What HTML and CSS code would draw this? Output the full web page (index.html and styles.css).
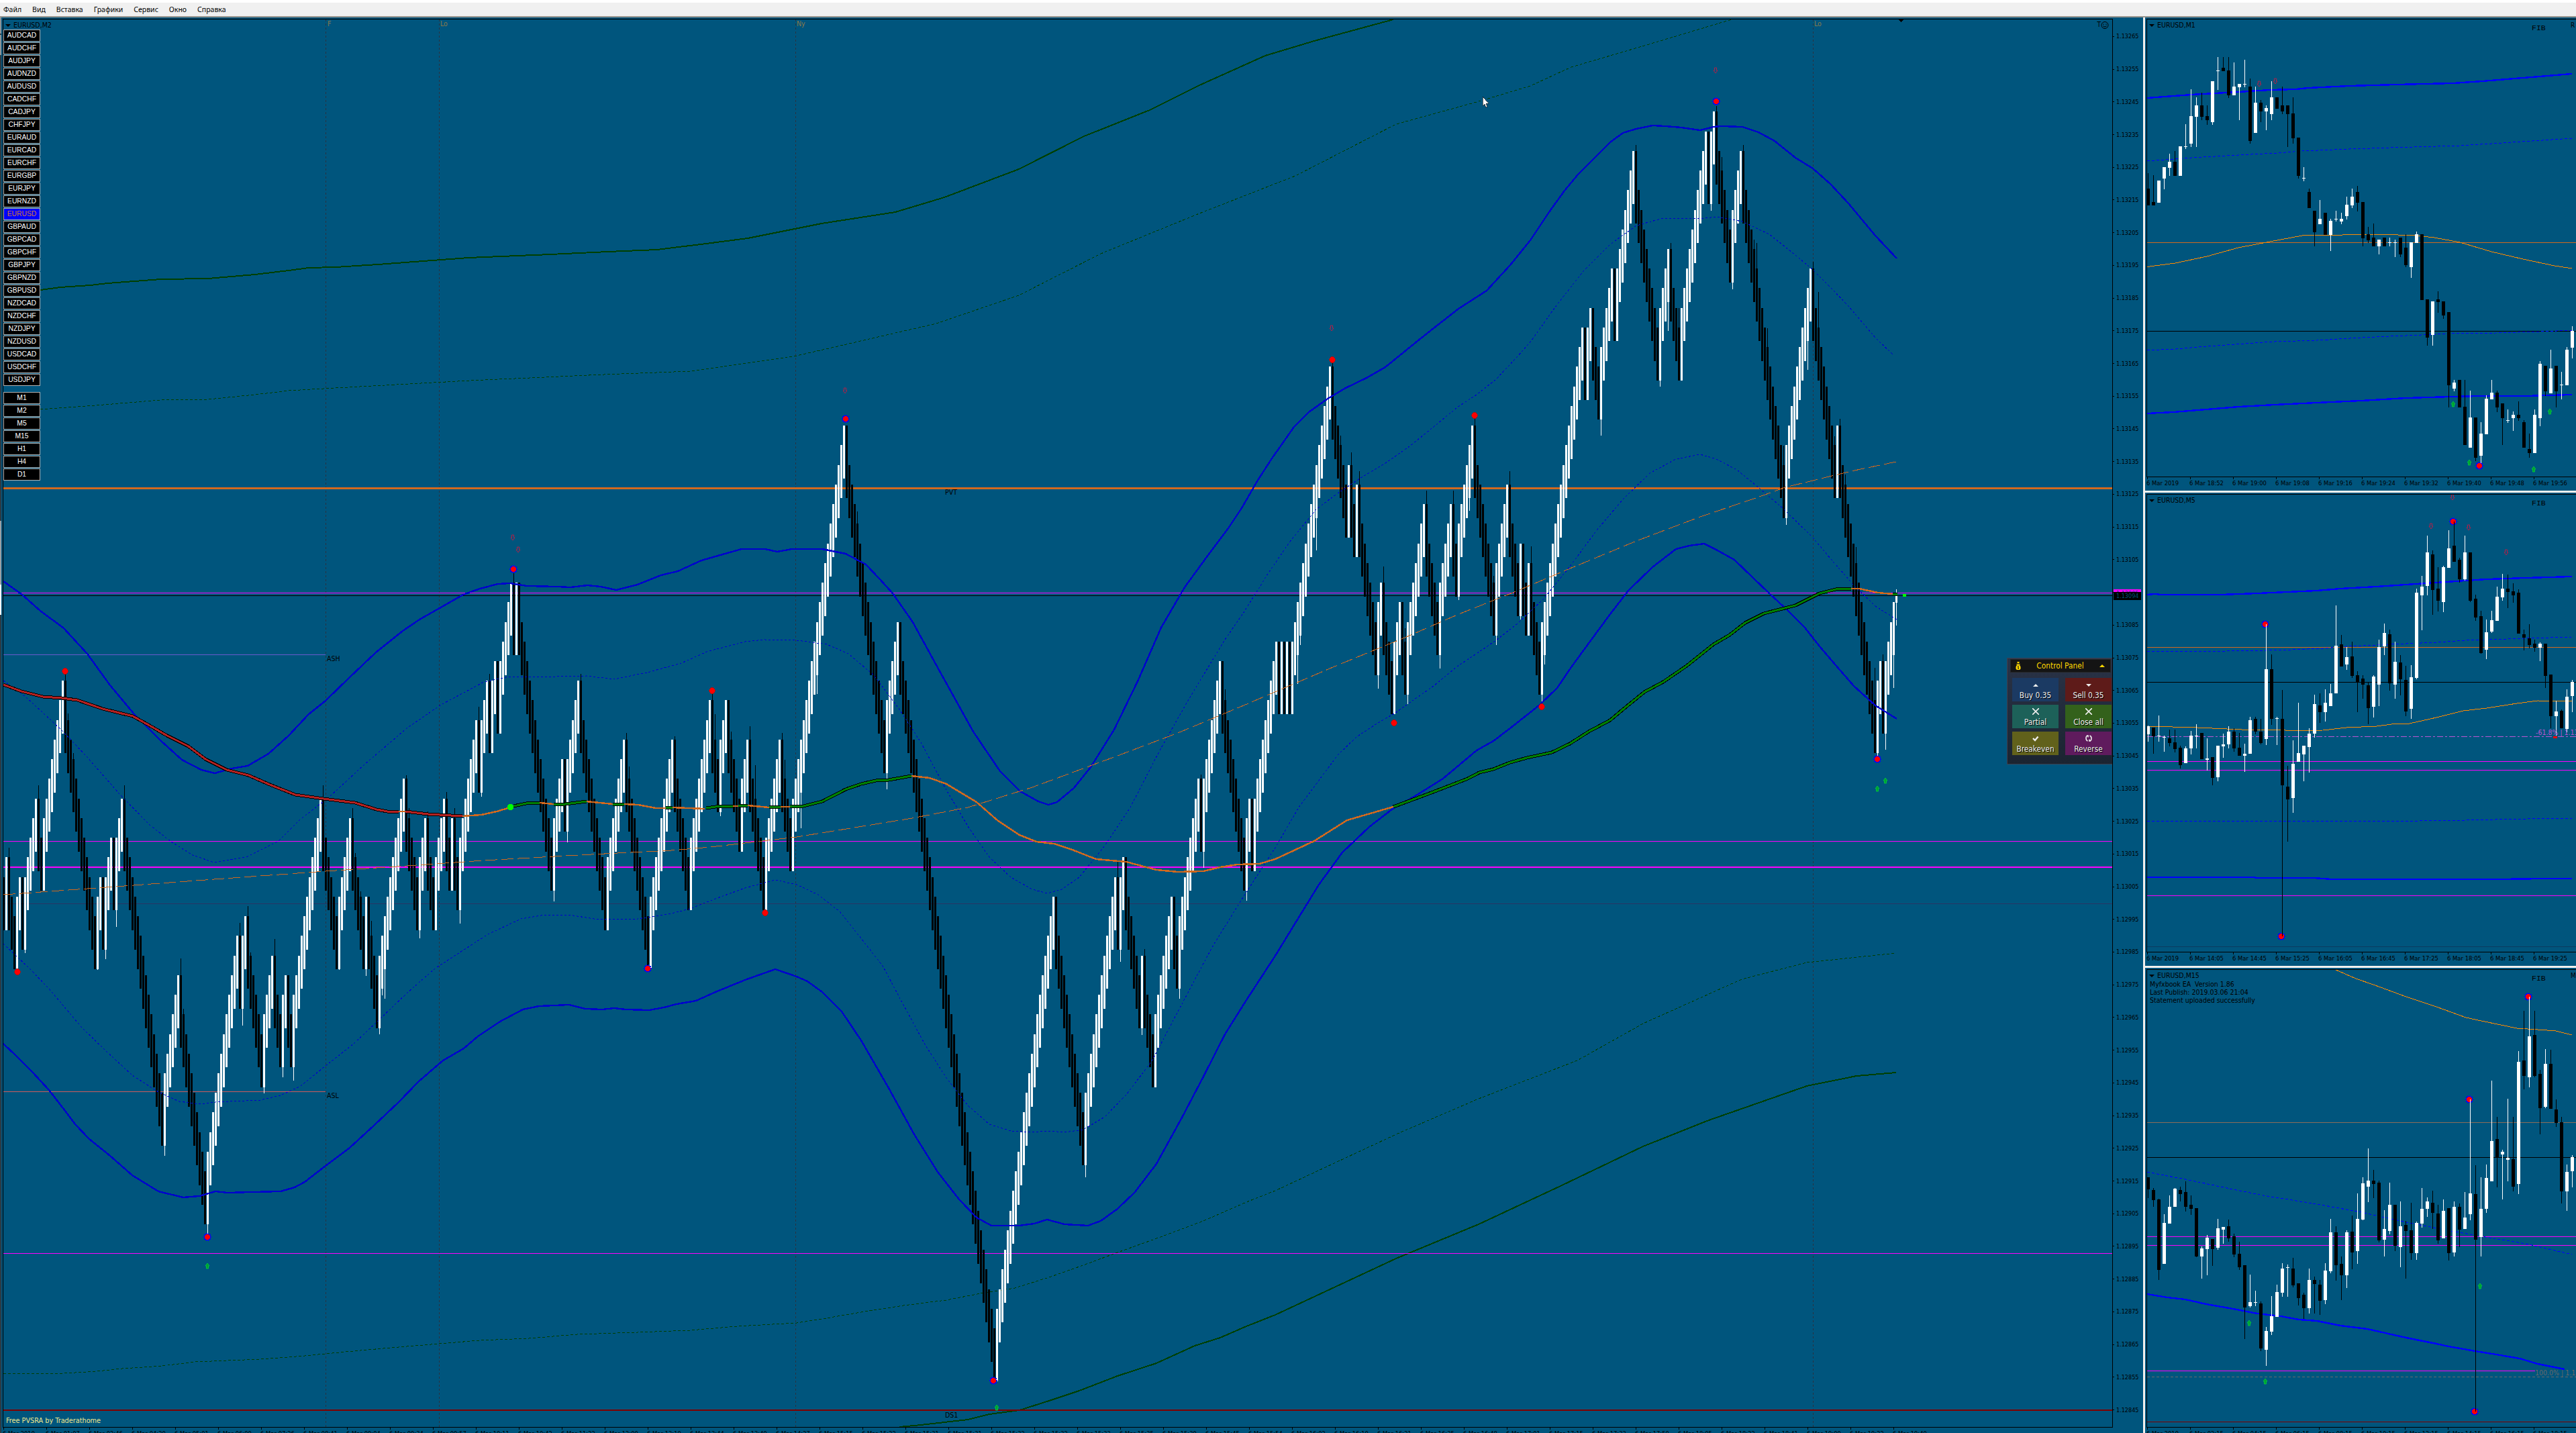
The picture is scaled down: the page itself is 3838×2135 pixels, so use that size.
FILE: index.html
```html
<!DOCTYPE html>
<html lang="ru">
<head>
  <meta charset="UTF-8" />
  <title>EURUSD,M2</title>
  <link rel="stylesheet" href="styles.css">
</head>
<body>
  <nav class="menubar">
    <span>Файл</span><span>Вид</span><span>Вставка</span><span>Графики</span><span>Сервис</span><span>Окно</span><span>Справка</span>
  </nav>

  <div class="workspace">
    <div class="edge"></div>

    <!-- Main chart -->
    <section class="window main">
      <div class="row">
        <div class="plot">
          <svg id="main" viewBox="5 29 3142 2097"></svg>
          <div class="title"><i class="tri"></i>EURUSD,M2</div>
          <div class="corner">T<svg class="smile" viewBox="0 0 12 12"><circle cx="6" cy="6" r="5"/><path d="M4 4v1.5M8 4v1.5M3.3 7.2Q6 10 8.7 7.2"/></svg></div>
          <div class="buttons">
            <div class="list" id="pairs"></div>
            <div class="list" id="frames"></div>
          </div>
          <div class="credit">Free PVSRA by Traderathome</div>

          <div class="panel">
            <div class="panel-head">
              <svg class="bag" viewBox="0 0 8 12"><path d="M2 0h4l-1 2h-2zM1.5 3h5v1h-5zM2 4.5h4l1.5 3v3l-1.5 1.5h-4l-1.500-1.500v-3z"/><path class="hole" d="M3 6.500h2v1h-1v1h1v2h-2v-1h1v-1h-1z"/></svg>
              <span>Control Panel</span>
              <i class="up"></i>
            </div>
            <div class="panel-grid">
              <button class="buy"><i class="up"></i>Buy 0.35</button>
              <button class="sell"><i class="down"></i>Sell 0.35</button>
              <button class="partial"><svg viewBox="0 0 10 10"><path d="M0 0L10 10M10 0L0 10"/></svg>Partial</button>
              <button class="close"><svg viewBox="0 0 10 10"><path d="M0 0L10 10M10 0L0 10"/></svg>Close all</button>
              <button class="even"><svg viewBox="0 0 10 10"><path class="thick" d="M1 5L4 8L8.500 2.500"/></svg>Breakeven</button>
              <button class="reverse"><svg viewBox="0 0 10 10"><path d="M4 1Q1 1 1 5Q1 8 3.500 9M6 9Q9 9 9 5Q9 2 6.500 1M2 1h2v2.500M8 9h-2v-2.500"/></svg>Reverse</button>
            </div>
          </div>
        </div>
        <div class="scale" id="scale">
          <div class="price ask">1.13095</div>
          <div class="price bid">1.13094</div>
        </div>
      </div>
      <div class="times" id="times-main"></div>
    </section>

    <!-- Side charts -->
    <div class="side">
      <section class="window">
        <div class="plot">
          <svg id="m1" viewBox="3199 29 639 681"></svg>
          <div class="title"><i class="tri"></i>EURUSD,M1</div>
          <div class="fib">FIB</div><div class="edge-text">R</div>
        </div>
        <div class="times" id="times-m1"></div>
      </section>
      <section class="window">
        <div class="plot">
          <svg id="m5" viewBox="3199 737 639 681"></svg>
          <div class="title"><i class="tri"></i>EURUSD,M5</div>
          <div class="fib">FIB</div>
        </div>
        <div class="times" id="times-m5"></div>
      </section>
      <section class="window">
        <div class="plot">
          <svg id="m15" viewBox="3199 1445 639 681"></svg>
          <div class="title"><i class="tri"></i>EURUSD,M15
            <p>Myfxbook EA&nbsp; Version 1.86<br>Last Publish: 2019.03.06 21:04<br>Statement uploaded successfully</p>
          </div>
          <div class="fib">FIB</div><div class="edge-text">M</div>
        </div>
        <div class="times" id="times-m15"></div>
      </section>
    </div>
  </div>

  <script src="script.js"></script>
</body>
</html>
```

FILE: styles.css
```css
* {
  box-sizing: border-box;
}

body {
  margin: 0;
  width: 3838px;
  height: 2135px;
  overflow: hidden;
  background: #00557d;
  color: #000;
  font-family: 'DejaVu Sans Condensed', 'DejaVu Sans', sans-serif;
  font-size: 9px;
}

.menubar {
  display: flex;
  gap: 16px;
  height: 26px;
  padding: 1px 0 0 5px;
  background: #f0f0f0;
  border-top: 4px solid #fff;
  border-bottom: 2px solid #9a968f;
  font: 10.5px/18px 'Noto Sans', sans-serif;
}

.workspace {
  display: flex;
  height: 2109px;
}

.edge {
  width: 2px;
  background: linear-gradient(#8b9499 0 24px, #2c3b45 24px 26px, #8b9499 26px 56px, #2c3b45 56px 750px, #9aa1a5 750px 845px, #fff 845px 890px, #2c3b45 890px);
}

.window {
  display: flex;
  flex-direction: column;
  padding: 2px 0 0 2px;
}

.main {
  width: 3191px;
}

.row {
  display: flex;
  height: 2099px;
}

.plot {
  position: relative;
  border: 1px solid #000;
  height: 683px;
}

.row .plot {
  width: 3144px;
  height: 2099px;
}

.plot > svg {
  display: block;
  width: 100%;
  height: 100%;
  shape-rendering: crispEdges;
}

.side {
  display: flex;
  flex-direction: column;
  width: 645px;
  border-left: 3px solid #f2f0ee;
}

.side .window {
  height: 705px;
  border-top: 3px solid #f2f0ee;
}

.side .window + .window {
  height: 708px;
}

.side .window:first-child {
  border-top: none;
}

.side .plot {
  border-right: none;
}

.title {
  position: absolute;
  left: 15px;
  top: 2px;
  font-size: 10.5px;
  line-height: 13px;
  white-space: nowrap;
}

.tri {
  position: absolute;
  left: -12px;
  top: 5px;
  border: 4px solid transparent;
  border-top-color: #000;
  border-bottom: 0;
}

.title p {
  margin: 0 0 0 -11px;
  line-height: 12px;
}

.corner {
  position: absolute;
  right: 5px;
  top: 2px;
  display: flex;
  font-size: 10px;
}

.smile {
  width: 12px;
  height: 13px;
  fill: none;
  stroke: #000;
}

.fib {
  position: absolute;
  left: 573px;
  top: 6px;
  font: 11.5px/13px 'Liberation Mono', monospace;
}

.edge-text {
  position: absolute;
  left: 631px;
  top: 3px;
  font-size: 10px;
}

/* Symbol and timeframe buttons */
.buttons {
  position: absolute;
  left: 0;
  top: 15px;
  display: flex;
  flex-direction: column;
  gap: 9px;
}

.list {
  display: flex;
  flex-direction: column;
  gap: 1px;
}

.list span {
  width: 55px;
  height: 18px;
  background: #000;
  border: 1px solid #b4b4b4;
  color: #fff;
  font: 10.3px/16px 'Liberation Sans', sans-serif;
  text-align: center;
}

.list .active {
  background: #0000ff;
  color: #d2783c;
}

.credit {
  position: absolute;
  left: 4px;
  bottom: 3px;
  color: #f0e68c;
  font-size: 10.8px;
}

/* Price and time scales */
.scale {
  position: relative;
  width: 45px;
  padding-top: 2px;
}

.scale .mark {
  display: flex;
  align-items: center;
  gap: 3px;
  height: 48.73px;
}

.scale .mark::before {
  content: '';
  width: 2px;
  height: 1px;
  background: #000;
}

.price {
  position: absolute;
  left: 1px;
  top: 850px;
  width: 41px;
  height: 12px;
  padding-left: 4px;
  line-height: 12px;
  background: #ff00ff;
  color: #00557d;
}

.bid {
  top: 854px;
  background: #000;
}

.times {
  display: flex;
  overflow: hidden;
  height: 20px;
  padding-left: 1px;
}

.main .times {
  height: 8px;
}

.times span {
  flex: none;
  width: 64px;
  height: 3px;
  padding-top: 3px;
  border-left: 1px solid #000;
  white-space: nowrap;
  text-indent: -2px;
  font-size: 9.4px;
}

/* Trade panel */
.panel {
  position: absolute;
  left: 2985px;
  top: 951px;
  width: 157px;
  height: 159px;
  padding: 1px 0 0 4px;
  background: linear-gradient(#2a3347, #1b2431);
  border: 1px solid #3b4254;
  border-right: none;
  font-size: 11.8px;
}

.panel-head {
  display: flex;
  align-items: center;
  justify-content: space-between;
  width: 150px;
  height: 20px;
  padding: 0 8px 0 7px;
  background: #141414;
  border: 1px solid #262626;
  color: #ffd800;
}

.bag {
  width: 8px;
  height: 12px;
  fill: #ffd800;
}

.bag .hole {
  fill: #141414;
}

.up,
.down {
  width: 0;
  height: 0;
  border: 4px solid transparent;
  border-bottom-color: currentColor;
  border-top: 0;
}

.down {
  border-top: 4px solid currentColor;
  border-bottom: 0;
}

.panel-grid {
  display: grid;
  grid-template-columns: 69px 69px;
  gap: 5px 10px;
  padding: 8px 0 0 3px;
}

.panel-grid button {
  display: flex;
  flex-direction: column;
  align-items: center;
  justify-content: space-between;
  height: 35px;
  padding: 5px 0 2px;
  border: none;
  color: #eee;
  font: inherit;
  line-height: 14px;
  text-shadow: 1px 1px #000;
}

.panel-grid button i {
  margin-top: 4px;
}

.panel-grid svg {
  width: 10px;
  height: 10px;
  fill: none;
  stroke: #eee;
  stroke-width: 1.6;
}

.panel-grid .thick {
  stroke-width: 2.4;
}

.buy { background: #1b3a63; }
.sell { background: #5e1b19; }
.partial { background: #1d6159; }
.close { background: #33611b; }
.even { background: #61611b; }
.reverse { background: #5f1b5d; }

/* Chart lines */
.ln { fill: none; stroke-width: 1; }
.blue { stroke: #0000cd; stroke-width: 2.4; }
.blue-dot { stroke: #0000cd; stroke-dasharray: 3 3; }
.bright { stroke: #0000ff; stroke-width: 2.4; }
.bright-dot { stroke: #0000ff; stroke-dasharray: 4 3; }
.green { stroke: #004000; stroke-width: 2; }
.green-dot { stroke: #004000; stroke-dasharray: 4 3; }
.case { stroke: #000; stroke-width: 5; }
.up-ma { stroke: #008000; stroke-width: 3; }
.down-ma { stroke: #b22222; stroke-width: 3; }
.flat-ma { stroke: #d2691e; stroke-width: 2.5; }
.dash { stroke: #d2691e; stroke-dasharray: 18 6; }
.orange { stroke: #ff8c00; }
.grid { stroke: #2b3140; stroke-dasharray: 3 3; }
.w { fill: #fff; }
.b { fill: #000; }
.note { font-size: 10.500px; }
```

FILE: script.js
```js
const NS = 'http://www.w3.org/2000/svg';
const $ = (id) => document.getElementById(id);

function add(svg, tag, attrs, text) {
  const el = document.createElementNS(NS, tag);
  for (const k in attrs) el.setAttribute(k, attrs[k]);
  if (text) el.textContent = text;
  svg.appendChild(el);
}

function line(svg, cls, pts) {
  add(svg, 'polyline', { class: 'ln ' + cls, points: pts });
}

function hline(svg, y, color, h = 1, x2 = 3838, x1 = 0) {
  add(svg, 'rect', { x: x1, y, width: x2 - x1, height: h, fill: color });
}

function bar(svg, x, cls, top, bottom, width) {
  const y = Math.round(top);
  add(svg, 'rect', { class: cls, x, y, width, height: Math.max(1, Math.round(bottom) - y) });
}

function sun(svg, x, y, star) {
  let p = '';
  for (let i = 0; i < 20; i++) {
    const r = i % 2 ? 4.5 : star ? 7 : 5.6;
    p += `${x + r * Math.cos(i * Math.PI / 10)},${y + r * Math.sin(i * Math.PI / 10)} `;
  }
  add(svg, 'polygon', { points: p, fill: star ? '#0000ff' : '#a01414' });
  add(svg, 'ellipse', { cx: x, cy: y, rx: 4, ry: 4.5, fill: '#ff0000' });
}

function arrow(svg, x, y, up) {
  const s = up ? 1 : -1;
  const p = [[0, -4], [3, 0], [1.5, 0], [1.5, 4], [-1.5, 4], [-1.5, 0], [-3, 0]];
  add(svg, 'polygon', {
    points: p.map(([a, b]) => `${x + a},${y + b * s}`).join(' '),
    fill: up ? '#00a030' : '#00557d', stroke: up ? '#00d040' : '#dc143c', 'shape-rendering': 'auto', 'stroke-width': 0.8
  });
}

// ---------- lists ----------
'AUDCAD AUDCHF AUDJPY AUDNZD AUDUSD CADCHF CADJPY CHFJPY EURAUD EURCAD EURCHF EURGBP EURJPY EURNZD EURUSD GBPAUD GBPCAD GBPCHF GBPJPY GBPNZD GBPUSD NZDCAD NZDCHF NZDJPY NZDUSD USDCAD USDCHF USDJPY'
  .split(' ').forEach((s) => {
    $('pairs').innerHTML += `<span class="${s === 'EURUSD' ? 'active' : ''}">${s}</span>`;
  });
'M1 M2 M5 M15 H1 H4 D1'.split(' ').forEach((s) => {
  $('frames').innerHTML += `<span>${s}</span>`;
});
for (let p = 113265; p >= 112845; p -= 10) {
  $('scale').innerHTML += `<div class="mark">${(p / 100000).toFixed(5)}</div>`;
}

function times(id, list) {
  $(id).innerHTML = list.split(' ').map((t) => `<span>6 Mar ${t}</span>`).join('');
}
times('times-main', '2019 01:07 02:46 04:20 05:01 06:00 07:26 08:41 09:04 09:34 09:57 10:11 10:42 11:22 12:00 13:10 13:44 13:49 14:27 15:15 15:22 15:31 15:31 15:32 15:32 15:33 15:35 15:39 15:45 15:54 16:02 16:10 16:21 16:35 16:48 17:01 17:15 17:33 17:50 18:05 18:22 18:41 19:00 19:22 19:40');
times('times-m1', '2019 18:52 19:00 19:08 19:16 19:24 19:32 19:40 19:48 19:56');
times('times-m5', '2019 14:05 14:45 15:25 16:05 16:45 17:25 18:05 18:45 19:25');
times('times-m15', '2019 02:15 04:15 06:15 08:15 10:15 12:15 14:15 16:15 18:15');

// ---------- main chart ----------
const main = $('main');
[485, 654, 1185, 2701].forEach((x) => line(main, 'grid', `${x}.5,29 ${x}.5,2126`));
line(main, 'green', '60,432 90,428 135,425 160,422 200,419 240,416 310,415 380,409 430,403 460,399 500,398 563,394 698,384 820,379 906,375 979,372 1052,363 1114,355 1224,333 1334,316 1407,294 1518,252 1615,203 1713,164 1787,127 1885,83 1958,61 2076,29');
line(main, 'green-dot', '60,610 130,605 240,596 310,595 380,588 430,582 500,578 700,567 900,558 1030,553 1187,530 1395,482 1518,440 1640,378 1787,318 1930,262 2080,185 2200,152 2280,128 2341,100 2450,68 2560,35 2580,29');
line(main, 'green-dot', '5,2046 79,2047 145,2043 182,2039 242,2035 291,2029 388,2025 454,2020 515,2014 582,2008 654,2002 715,1997 788,1994 860,1988 950,1985 1028,1982 1098,1976 1187,1971 1225,1965 1283,1955 1346,1945 1410,1937 1461,1927 1512,1919 1563,1903 1614,1885 1665,1866 1729,1843 1793,1819 1857,1791 1900,1774 2080,1690 2203,1637 2350,1580 2448,1525 2595,1459 2692,1434 2825,1420');
line(main, 'green', '1340,2126 1372,2123 1442,2115 1474,2107 1519,2101 1563,2087 1608,2072 1665,2050 1723,2031 1780,2005 1818,1993 1857,1976 1900,1959 2080,1875 2203,1824 2325,1767 2448,1708 2546,1669 2692,1618 2766,1603 2825,1598');

hline(main, 726, '#d2691e', 3);
hline(main, 883, '#ff00ff');
hline(main, 887, '#000');
hline(main, 1253, '#ff00ff');
hline(main, 1291, '#ff00ff', 2);
hline(main, 1346, '#2a3563');
hline(main, 1867, '#ff00ff');
hline(main, 2100, '#800000', 2);
hline(main, 975, '#6a5acd', 1, 485);
hline(main, 1626, '#cd5c5c', 1, 485);

// Renko legs: >0 rising bricks, <0 falling bricks
const legs = [1, -3, 2, -1, 5, -2, 8, -12, 2, -1, 3, -1, 3, -15, 6, -10, 12, -1, 2, -6, 4, -3, 2, -2, 11, -6, 5, -5, 1, -4,
  10, -5, 3, -3, 4, -2, 1, -2, 7, -1, 3, -1, 2, -1, 5, -1, 1, -13, 4, -1, 5, -10, 7, -9, 9, -6, 8, -3, 3, -5, 3, -6, 6, -4,
  20, -15, 5, -36, 22, -11, 12, -1, 2, -6, 1, -4, 7, -2, 8, -1, 7, -9, 2, -1, 9, -1, 1, -1, 1, -1, 15, -6, 1, -2, 1, -7, 2,
  -4, 3, -2, 7, -5, 5, -2, 6, -8, 5, -4, 1, -2, 1, -4, 16, -1, 2, -3, 5, -1, 7, -9, 4, -4, 10, -1, 2, -6, 4, -16, 10, -9,
  1, -14, 2, -1, 4];
const PT = 4.873;
const wick = { 2: 14, 5: 2, 8: 5, 13: 20, 23: 10, 24: 10, 26: 9, 35: 1, 38: 14, 42: 25, 45: 20, 60: 15, 66: 25, 67: 8, 76: 14, 88: 19, 89: 25, 91: 15,
  92: 5, 97: 9, 101: 25, 104: 15, 108: 20, 119: 20, 125: 1, 130: 15, 131: 6, 133: 8, 135: 10, 137: 22, 140: 9, 141: 10, 142: 44, 150: 5,
  151: 15, 155: 12, 158: 10, 165: 10, 168: 15, 170: 20, 178: 6, 177: 20, 181: 10, 190: 14, 205: 16, 215: 10, 210: 16, 232: 10, 233: 18, 250: 5,
  264: 10, 265: 38, 267: 6, 271: 12, 278: 20, 280: 50, 290: 10, 291: 28, 297: 53, 303: 28, 318: 18, 329: 24, 403: 18, 415: 25, 416: 18,
  424: 10, 425: 10, 438: 15, 446: 6, 447: 24, 455: 16, 463: 15, 495: 7, 498: 14, 502: 19, 505: 20, 512: 20, 514: 24, 522: 20, 523: 14,
  530: 20, 535: 20, 540: 20, 542: 5, 546: 19, 548: 14, 555: 10, 556: 14, 561: 20, 565: 5, 569: 25, 573: 14, 574: 14, 489: 48, 482: 43, 483: 14, 595: 24, 608: 9,
  617: 9, 620: 43, 624: 29, 621: 9, 636: 10, 638: 8, 640: 20, 644: 10, 648: 9, 652: 14, 653: 38, 657: 28, 663: 29, 664: 10, 674: 10, 676: 53,
  672: 43, 682: 13, 684: 10, 686: 15, 690: 24, 697: 48, 698: 5, 700: 10, 701: 24, 704: 49 };

function brick(k, white, top, bottom) {
  const cls = white ? 'w' : 'b';
  bar(main, 4 + k * 4, cls, top, bottom, 3);
  if (wick[k]) {
    if (white) bar(main, 5 + k * 4, cls, bottom, bottom + wick[k], 1);
    else bar(main, 5 + k * 4, cls, top - wick[k], top, 1);
  }
}

let k = 0;
let edge = 1384.6;
brick(k++, false, 1307, 1386);
for (const n of legs) {
  const up = n > 0;
  for (let i = 0; i < Math.abs(n); i++) {
    // the reversal brick is 22 points tall, the rest are 16 with a 6 point step
    const far = 22 + 6 * i;
    const near = i ? far - 16 : 0;
    if (up) brick(k, true, edge - far * PT, edge - near * PT + 1);
    else brick(k, false, edge + near * PT, edge + far * PT + 1);
    k++;
  }
  edge += (up ? -1 : 1) * (22 + 6 * (Math.abs(n) - 1)) * PT;
}
bar(main, 2824, 'w', 887, 898, 3);
bar(main, 2825, 'w', 878, 932, 1);

line(main, 'blue', '5,866 33,886 60,910 95,936 130,974 164,1021 200,1064 240,1104 271,1132 300,1147 320,1152 345,1145 369,1141 400,1123 430,1096 460,1064 485,1044 520,1010 560,972 600,940 625,923 655,906 690,886 715,877 742,870 760,869 785,873 830,874 850,875 875,872 895,874 918,879 950,871 985,857 1010,851 1045,835 1080,825 1105,818 1140,818 1158,822 1180,818 1225,818 1260,825 1290,841 1310,862 1330,884 1360,927 1400,1000 1450,1090 1490,1149 1520,1179 1547,1194 1562,1199 1575,1195 1600,1174 1625,1143 1660,1087 1695,1015 1730,935 1765,875 1800,827 1830,787 1850,757 1873,717 1895,683 1928,636 1950,614 1978,594 2005,578 2036,563 2064,547 2112,508 2136,489 2173,460 2215,433 2250,395 2280,358 2308,316 2331,284 2351,260 2371,240 2399,212 2418,198 2438,192 2462,187 2482,188 2505,190 2533,194 2553,189 2565,188 2596,189 2620,197 2644,210 2675,235 2701,251 2727,274 2754,303 2794,351 2826,385');
line(main, 'blue', '5,1555 24,1573 48,1597 73,1624 97,1655 112,1675 133,1697 164,1722 197,1751 236,1775 273,1784 297,1782 321,1775 339,1777 376,1776 418,1775 439,1769 454,1761 485,1737 521,1710 557,1677 594,1642 624,1611 660,1580 691,1562 712,1544 745,1522 779,1504 803,1499 848,1497 872,1503 897,1504 915,1502 932,1504 967,1505 989,1501 1008,1496 1037,1491 1066,1478 1110,1460 1155,1444 1187,1455 1203,1462 1225,1478 1254,1507 1283,1550 1324,1621 1362,1690 1397,1746 1429,1787 1455,1814 1477,1826 1519,1826 1541,1823 1560,1817 1586,1824 1621,1826 1640,1819 1665,1801 1691,1776 1723,1734 1761,1665 1793,1604 1825,1541 1857,1490 1900,1424 1930,1375 1965,1318 2000,1270 2040,1232 2075,1205 2110,1185 2150,1160 2200,1118 2225,1104 2250,1085 2293,1051 2320,1025 2341,994 2371,953 2399,915 2426,880 2462,845 2497,818 2517,813 2539,810 2557,819 2584,834 2612,861 2636,884 2664,910 2689,935 2711,963 2735,991 2762,1022 2794,1051 2826,1071');
line(main, 'blue-dot', '5,1014 38,1038 92,1088 128,1126 179,1184 223,1229 255,1254 287,1274 319,1285 367,1277 415,1253 446,1222 491,1187 542,1140 606,1085 657,1050 721,1016 759,1008 829,1008 874,1007 915,1012 964,1002 1015,988 1053,971 1110,956 1139,953 1187,954 1232,960 1264,974 1302,1006 1340,1057 1372,1106 1410,1177 1442,1231 1474,1277 1506,1307 1538,1325 1560,1331 1582,1325 1608,1307 1646,1260 1684,1203 1729,1116 1774,1037 1825,953 1852,914 1889,855 1921,808 1961,759 1993,735 2029,711 2064,690 2100,665 2136,636 2171,607 2200,588 2229,565 2261,531 2282,507 2316,459 2359,404 2399,364 2438,336 2478,325 2533,326 2557,323 2596,330 2636,349 2675,380 2701,402 2727,428 2754,456 2794,503 2822,530');
line(main, 'blue-dot', '5,1406 45,1444 73,1473 121,1530 158,1566 197,1602 236,1627 267,1641 297,1645 321,1642 388,1639 418,1632 448,1618 485,1588 527,1555 563,1521 606,1480 648,1443 685,1419 727,1392 776,1369 806,1364 848,1363 885,1369 950,1369 996,1362 1028,1354 1066,1339 1110,1323 1155,1311 1187,1318 1219,1333 1251,1358 1283,1398 1315,1439 1346,1497 1378,1556 1410,1606 1442,1647 1474,1675 1506,1685 1538,1687 1563,1685 1586,1687 1614,1683 1646,1664 1678,1631 1716,1581 1755,1507 1806,1411 1850,1340 1900,1263 1935,1203 1970,1156 1993,1125 2021,1098 2050,1079 2079,1062 2100,1047 2136,1022 2171,993 2207,969 2229,954 2261,929 2300,892 2339,844 2379,790 2418,744 2458,705 2497,684 2533,677 2557,684 2588,700 2616,723 2656,757 2701,801 2727,832 2762,872 2794,903 2826,923');
line(main, 'dash', '5,1333 172,1321 319,1310 485,1298 606,1290 721,1282 861,1274 1000,1267 1059,1262 1187,1247 1359,1219 1442,1203 1538,1173 1665,1126 1755,1092 1853,1051 1904,1029 1993,991 2100,947 2171,916 2254,883 2332,850 2438,806 2533,770 2616,742 2660,726 2701,716 2758,702 2825,688');

// Moving average, coloured by slope
const ma = [
  ['down', '5,1020 32,1030 64,1038 92,1040 115,1043 153,1056 198,1067 223,1081 249,1096 281,1112 306,1131 338,1147 370,1155 402,1169 440,1184 482,1190 529,1196 561,1206 577,1209 594,1209'],
  ['flat', '594,1209 604,1209'],
  ['down', '604,1209 638,1213 689,1216'],
  ['flat', '689,1216 717,1214 740,1209 760,1203'],
  ['up', '765,1201 784,1197 804,1196'],
  ['flat', '804,1196 825,1198'],
  ['up', '825,1198 842,1198 874,1194'],
  ['flat', '874,1194 913,1198'],
  ['up', '913,1198 930,1198'],
  ['flat', '930,1198 951,1199 977,1204 992,1204'],
  ['up', '992,1204 1002,1203'],
  ['flat', '1002,1203 1050,1205'],
  ['up', '1052,1204 1066,1202 1085,1201 1092,1201'],
  ['flat', '1092,1201 1100,1201'],
  ['up', '1100,1201 1114,1200'],
  ['flat', '1114,1200 1146,1203'],
  ['up', '1146,1203 1163,1202'],
  ['flat', '1163,1202 1177,1202'],
  ['up', '1177,1202 1197,1201 1225,1194 1260,1176 1283,1168 1305,1163 1324,1162 1358,1156'],
  ['flat', '1358,1156 1385,1159 1410,1168 1455,1195 1487,1223 1519,1244 1544,1254 1570,1257 1595,1265 1633,1280 1678,1284 1723,1296 1755,1299 1793,1298 1818,1292 1844,1288 1876,1287 1900,1280 1958,1253 2007,1222 2076,1202'],
  ['up', '2076,1202 2130,1182 2187,1160 2204,1151 2225,1146 2250,1136 2275,1129 2312,1121 2339,1108 2367,1090 2399,1073 2418,1057 2450,1031 2478,1016 2513,992 2553,960 2577,946 2600,928 2628,914 2675,902 2711,884 2735,878 2758,877'],
  ['flat', '2758,877 2770,877 2798,883 2820,885'],
  ['up', '2820,885 2827,885']
];
for (const [dir, pts] of ma) {
  if (dir !== 'flat') line(main, 'case', pts);
  line(main, dir + '-ma', pts);
}
add(main, 'ellipse', { cx: 760.5, cy: 1202.500, rx: 5, ry: 4.5, fill: '#00ff00' });
add(main, 'rect', { x: 2835, y: 885, width: 5, height: 4, fill: '#00ff00' });

[[97, 1000], [765, 848, 1], [1260, 624, 1], [26, 1448], [309, 1843, 1], [965, 1443, 1], [1140, 1360], [1061, 1029], [1480, 2057, 1],
  [1985, 536], [2197, 619], [2077, 1077], [2297, 1053], [2557, 151, 1], [2797, 1131, 1]].forEach((s) => sun(main, ...s));
[[764, 801], [772, 819], [1259, 582], [1984, 489], [2556, 105], [309, 1886, 1], [1485, 2097, 1], [2797, 1175, 1], [2809, 1163, 1]]
  .forEach((a) => arrow(main, ...a));
[[487, 985, 'ASH'], [487, 1636, 'ASL'], [1408, 737, 'PVT'], [1408, 2112, 'DS1']]
  .forEach(([x, y, t]) => add(main, 'text', { class: 'note', x, y }, t));
[[488, 39, 'F'], [656, 39, 'Lo'], [1187, 39, 'Ny'], [2703, 39, 'Lo']]
  .forEach(([x, y, t]) => add(main, 'text', { class: 'note', x, y, fill: '#8a7a4a' }, t));
add(main, 'polygon', { points: '2828,29 2836,29 2832,33' });
add(main, 'polygon', { points: '2209,144 2209,158 2212,155 2214,160 2216,159 2214,154 2218,154', fill: '#fff', stroke: '#000', 'stroke-width': 0.6 });

// ---------- side charts ----------
// each candle: colour, high, body top, body bottom, low
function candles(svg, base, unit, data) {
  data.trim().split(/\s*\n\s*/).join(' / ').split(' / ').forEach((c, i) => {
    const [cls, ...v] = c.split(' ');
    const [h, t, b, l] = v.map((n) => base + n * unit);
    const x = 3200 + i * 8;
    bar(svg, x, cls, h, l, 1);
    bar(svg, x - 2, cls, t, b, 5);
  });
}

const m1 = $('m1');
hline(m1, 361, '#d2691e');
hline(m1, 493, '#000');
line(m1, 'bright', '3199,146 3265,141 3335,137 3382,134 3420,133 3439,131 3500,128 3571,126 3655,124 3698,121 3759,116 3832,110');
line(m1, 'bright-dot', '3199,240 3265,235 3335,231 3392,228 3430,225 3500,222 3594,219 3665,217 3712,214 3773,210 3832,206');
line(m1, 'orange', '3199,397.5 3241,392 3288,382 3335,369 3382,360 3430,351 3476,350.5 3505,349.5 3552,349.500 3594,350.5 3627,354 3665,361 3712,375 3759,386 3806,396 3832,400');
line(m1, 'bright-dot', '3199,522 3242,520 3287,516 3331,513 3389,509 3452,507 3518,503 3585,500 3652,497 3719,496 3786,494 3832,492');
line(m1, 'bright', '3199,616 3238,614 3287,610 3336,606 3389,603 3452,600 3518,597 3585,593 3652,591 3697,590 3763,590 3832,588');
candles(m1, 0, 1 / 3, `b 774 843 917 917 / b 783 903 917 917 / w 807 807 906 906 / w 747 747 797 846 / w 687 723 750 786
b 675 723 786 786 / w 654 654 786 786 / w 555 654 657 666 / w 399 519 641 657 / w 435 471 521 657
b 414 471 521 537 / b 471 519 537 558 / w 363 363 546 558 / w 255 315 318 402 / b 255 303 318 318
b 255 315 426 438 / w 279 387 426 426 / w 375 375 390 537 / w 267 375 378 390 / b 351 387 630 641
w 387 459 594 594 / b 447 459 497 546 / w 471 483 497 582 / w 363 435 510 537 / b 435 435 486 486
b 387 471 498 510 / b 471 471 510 657 / b 435 507 618 641 / b 615 615 786 797 / w 747 795 798 810
b 843 857 930 930 / b 942 942 1038 1101 / w 894 978 1002 1002 / b 951 951 1050 1050 / w 978 987 1050 1122
w 942 978 981 990 / w 951 978 990 1002 / w 879 915 966 981 / w 843 879 918 930 / b 831 858 906 945
b 903 903 1065 1101 / b 1014 1047 1074 1086 / b 999 1062 1101 1101 / w 1071 1071 1101 1137 / b 1062 1062 1101 1101
w 1062 1083 1086 1101 / w 1071 1083 1086 1149 / b 1062 1062 1137 1149 / b 1047 1107 1185 1194 / w 1083 1083 1194 1241
w 1035 1047 1086 1086 / b 1047 1047 1341 1341 / b 1338 1338 1509 1545 / w 1347 1347 1497 1545 / b 1302 1338 1350 1398
b 1347 1347 1410 1425 / b 1395 1395 1722 1821 / w 1698 1710 1737 1749 / b 1698 1698 1821 1821 / b 1698 1818 1989 1989
w 1746 1866 2001 2001 / b 1866 1866 2046 2061 / w 1887 1938 2037 2085 / w 1767 1782 1941 1941 / w 1698 1755 1785 1785
b 1746 1755 1821 1842 / b 1803 1803 1869 1989 / w 1830 1878 1881 1890 / w 1839 1854 1869 1926 / b 1794 1854 1869 1881
b 1878 1887 2001 2001 / b 1938 2007 2025 2046 / w 1830 1854 2025 2025 / w 1614 1626 1869 1905 / b 1635 1635 1749 1770
w 1563 1647 1758 1758 / b 1635 1635 1749 1821 / w 1662 1719 1722 1785 / w 1551 1563 1722 1722 / w 1458 1479 1554 1602`);
sun(m1, 3694, 694, 1);
[[3366, 125], [3390, 121], [3655, 602, 1], [3679, 689, 1], [3775, 699, 1], [3799, 613, 1]].forEach((a) => arrow(m1, ...a));

const m5 = $('m5');
hline(m5, 964, '#d2691e');
hline(m5, 1016, '#000');
hline(m5, 1134, '#ff00ff');
hline(m5, 1147, '#ff00ff');
hline(m5, 1334, '#ff00ff');
hline(m5, 1410, '#0b3a5f');
add(m5, 'path', { d: 'M3199 1097.500H3838', stroke: '#ba55d3', 'stroke-dasharray': '9 3 3 3' });
line(m5, 'bright', '3199,886 3211,885 3220,886 3309,886 3363,884 3452,880 3487,877 3541,874 3585,871 3630,868 3674,865 3705,863 3763,861 3832,859');
line(m5, 'bright-dot', '3199,970 3318,970 3327,969 3376,969 3416,968 3461,966 3496,963 3541,961 3585,959 3630,957 3674,954 3705,953 3763,951 3832,949');
line(m5, 'orange', '3199,1082 3274,1084 3340,1087 3389,1087 3420,1089 3461,1088 3496,1084 3541,1082 3563,1079 3590,1078 3630,1069 3670,1059 3705,1055 3750,1048 3781,1044 3817,1045 3832,1044');
line(m5, 'bright-dot', '3199,1223 3474,1223 3541,1224 3603,1223 3674,1222 3763,1220 3832,1219');
line(m5, 'bright', '3199,1307 3358,1307 3362,1308 3447,1308 3474,1310 3665,1310 3719,1310 3794,1309 3832,1309');
sun(m5, 3399, 1395, 1);
sun(m5, 3375, 930, 1);
sun(m5, 3655, 777, 1);
candles(m5, 880, 1 / 3, `w 603 606 642 675 / b 612 612 651 729 / w 558 648 651 675 / w 648 654 657 720 / b 621 660 681 696
b 621 678 708 723 / b 693 702 780 795 / w 696 705 771 771 / w 627 648 705 732 / w 597 648 651 705
b 636 636 753 753 / w 660 750 756 804 / b 744 744 837 870 / w 693 693 834 852 / w 639 687 696 747
w 606 630 687 705 / b 615 630 705 720 / b 636 702 738 738 / w 684 729 738 810 / w 564 579 729 729
b 564 573 630 642 / b 573 630 681 687 / w 150 351 663 690 / b 285 351 573 600 / w 564 570 573 690
b 444 573 870 1545 / b 783 876 933 1122 / w 669 774 927 993 / w 501 726 765 765 / w 693 693 732 852
w 615 639 699 813 / w 465 507 639 657 / b 459 513 543 591 / w 441 501 543 585 / w 417 459 516 516
w 66 246 459 459 / b 198 240 339 339 / w 252 297 330 354 / b 228 294 381 390 / b 360 378 410 543
b 378 393 420 483 / b 411 423 525 597 / w 378 384 519 567 / w 219 252 420 516 / w 147 189 249 288
b 174 195 414 447 / w 228 318 420 483 / b 288 321 396 468 / b 336 399 540 561 / w 333 387 528 573
w -9 9 390 396 / w -66 -18 21 177 / w -246 -171 -21 21 / b -180 -162 -3 108 / b -105 -9 45 93
w -111 -105 51 96 / w -270 -189 -102 -102 / b -310 -201 -129 -129 / b -147 -138 -51 -36 / w -246 -171 -51 -45
b -171 -171 45 51 / b 18 36 120 135 / b 90 114 279 282 / w 129 186 264 306 / w 90 132 183 189
w -18 27 135 135 / w -75 -9 30 45 / b -72 -9 6 78 / b -33 3 21 54 / b -6 9 192 192
b 174 195 210 267 / b 150 213 243 258 / b 219 237 255 273 / w 231 237 255 315 / b 237 237 381 435
b 375 375 561 615 / w 492 540 561 648 / b 531 537 615 615 / w 441 474 618 633 / w 399 408 471 543`);
add(m5, 'rect', { x: 3804, y: 1097, width: 6, height: 3, fill: '#ff0000' });
add(m5, 'text', { class: 'note', x: 3778, y: 1095, fill: '#ba55d3' }, '-61.8% | 1.13046');
[[3654, 741], [3622, 784], [3678, 786], [3734, 823]].forEach((a) => arrow(m5, ...a));

const m15 = $('m15');
hline(m15, 1672, '#8a6c58');
hline(m15, 1724, '#000');
hline(m15, 1842, '#ff00ff');
hline(m15, 1855, '#ff00ff');
hline(m15, 2042, '#ff00ff', 1, 3777);
hline(m15, 2118, '#800000');
add(m15, 'path', { d: 'M3199 2051.500H3838', stroke: '#696969', 'stroke-dasharray': '4 3' });
line(m15, 'orange', '3478,1444 3510,1458 3536,1467 3585,1485 3630,1500 3674,1516 3697,1521 3750,1532 3781,1534 3808,1536 3832,1542');
line(m15, 'bright-dot', '3199,1746 3229,1752 3256,1757 3327,1772 3372,1781 3452,1794 3518,1806 3585,1821 3652,1834 3697,1842 3763,1853 3832,1869');
line(m15, 'bright', '3199,1928 3229,1933 3256,1936 3287,1943 3327,1950 3363,1957 3398,1961 3425,1966 3452,1968 3487,1975 3527,1980 3585,1993 3630,2002 3648,2006 3688,2013 3719,2018 3754,2024 3781,2032 3821,2040');
sun(m15, 3767, 1485, 1);
sun(m15, 3679, 1638, 1);
sun(m15, 3687, 2103, 1);
candles(m15, 1300, 0.5325, `b 853 853 886 910 / b 882 888 916 935 / b 912 915 1112 1140 / w 956 980 1095 1095 / w 903 935 982 982
w 882 884 935 935 / b 879 888 899 920 / b 864 894 935 948 / b 903 930 941 958 / b 939 939 1074 1076
w 1046 1052 1074 1136 / w 1015 1021 1053 1127 / b 1025 1025 1053 1100 / w 969 995 1050 1055 / w 992 992 999 1038
b 971 990 1023 1033 / b 1010 1018 1068 1076 / b 1033 1067 1104 1112 / b 1099 1099 1217 1305 / w 1125 1202 1213 1217
w 1170 1202 1204 1213 / b 1200 1206 1331 1339 / w 1271 1283 1335 1380 / w 1185 1241 1284 1294 / w 1153 1174 1243 1243
w 1093 1108 1176 1187 / w 1097 1104 1106 1187 / b 1078 1108 1155 1161 / b 1149 1149 1191 1211 / b 1176 1181 1219 1249
w 1108 1140 1219 1234 / b 1130 1140 1151 1234 / b 1140 1153 1198 1237 / w 1093 1114 1196 1207 / w 969 1007 1115 1121
b 990 1007 1099 1142 / b 1074 1094 1127 1196 / w 1001 1007 1127 1162 / b 960 1005 1063 1110 / w 898 969 1059 1095
w 853 869 971 973 / w 772 862 879 922 / b 832 862 871 911 / b 862 868 1029 1035 / w 945 997 1027 1074
w 868 930 1003 1012 / b 930 930 1044 1059 / w 920 990 1048 1104 / b 975 986 1003 1136 / b 924 1001 1065 1084
w 976 980 1065 1084 / w 882 941 982 993 / w 909 920 941 963 / b 890 924 952 997 / b 930 954 1029 1038
w 915 946 1023 1023 / b 939 939 1065 1085 / w 920 935 1063 1074 / b 926 935 999 1048 / w 894 965 997 997
w 634 898 956 973 / b 819 899 1027 1508 / w 853 941 1020 1074 / w 817 854 941 952 / w 582 751 864 864
b 684 746 797 881 / w 776 781 789 915 / w 632 798 804 864 / b 684 802 879 892 / w 500 530 871 899
b 387 526 569 607 / w 348 458 573 601 / b 387 454 569 573 / b 552 563 659 732 / w 494 535 655 659
b 496 535 661 661 / b 635 663 700 711 / b 684 699 892 926 / w 817 838 892 946 / w 791 796 836 881`);
add(m15, 'text', { class: 'note', x: 3777, y: 2049, fill: '#696969' }, '100.0% | 1.12853');
[[3351, 1971, 1], [3375, 2058, 1], [3695, 1916, 1]].forEach((a) => arrow(m15, ...a));
```
